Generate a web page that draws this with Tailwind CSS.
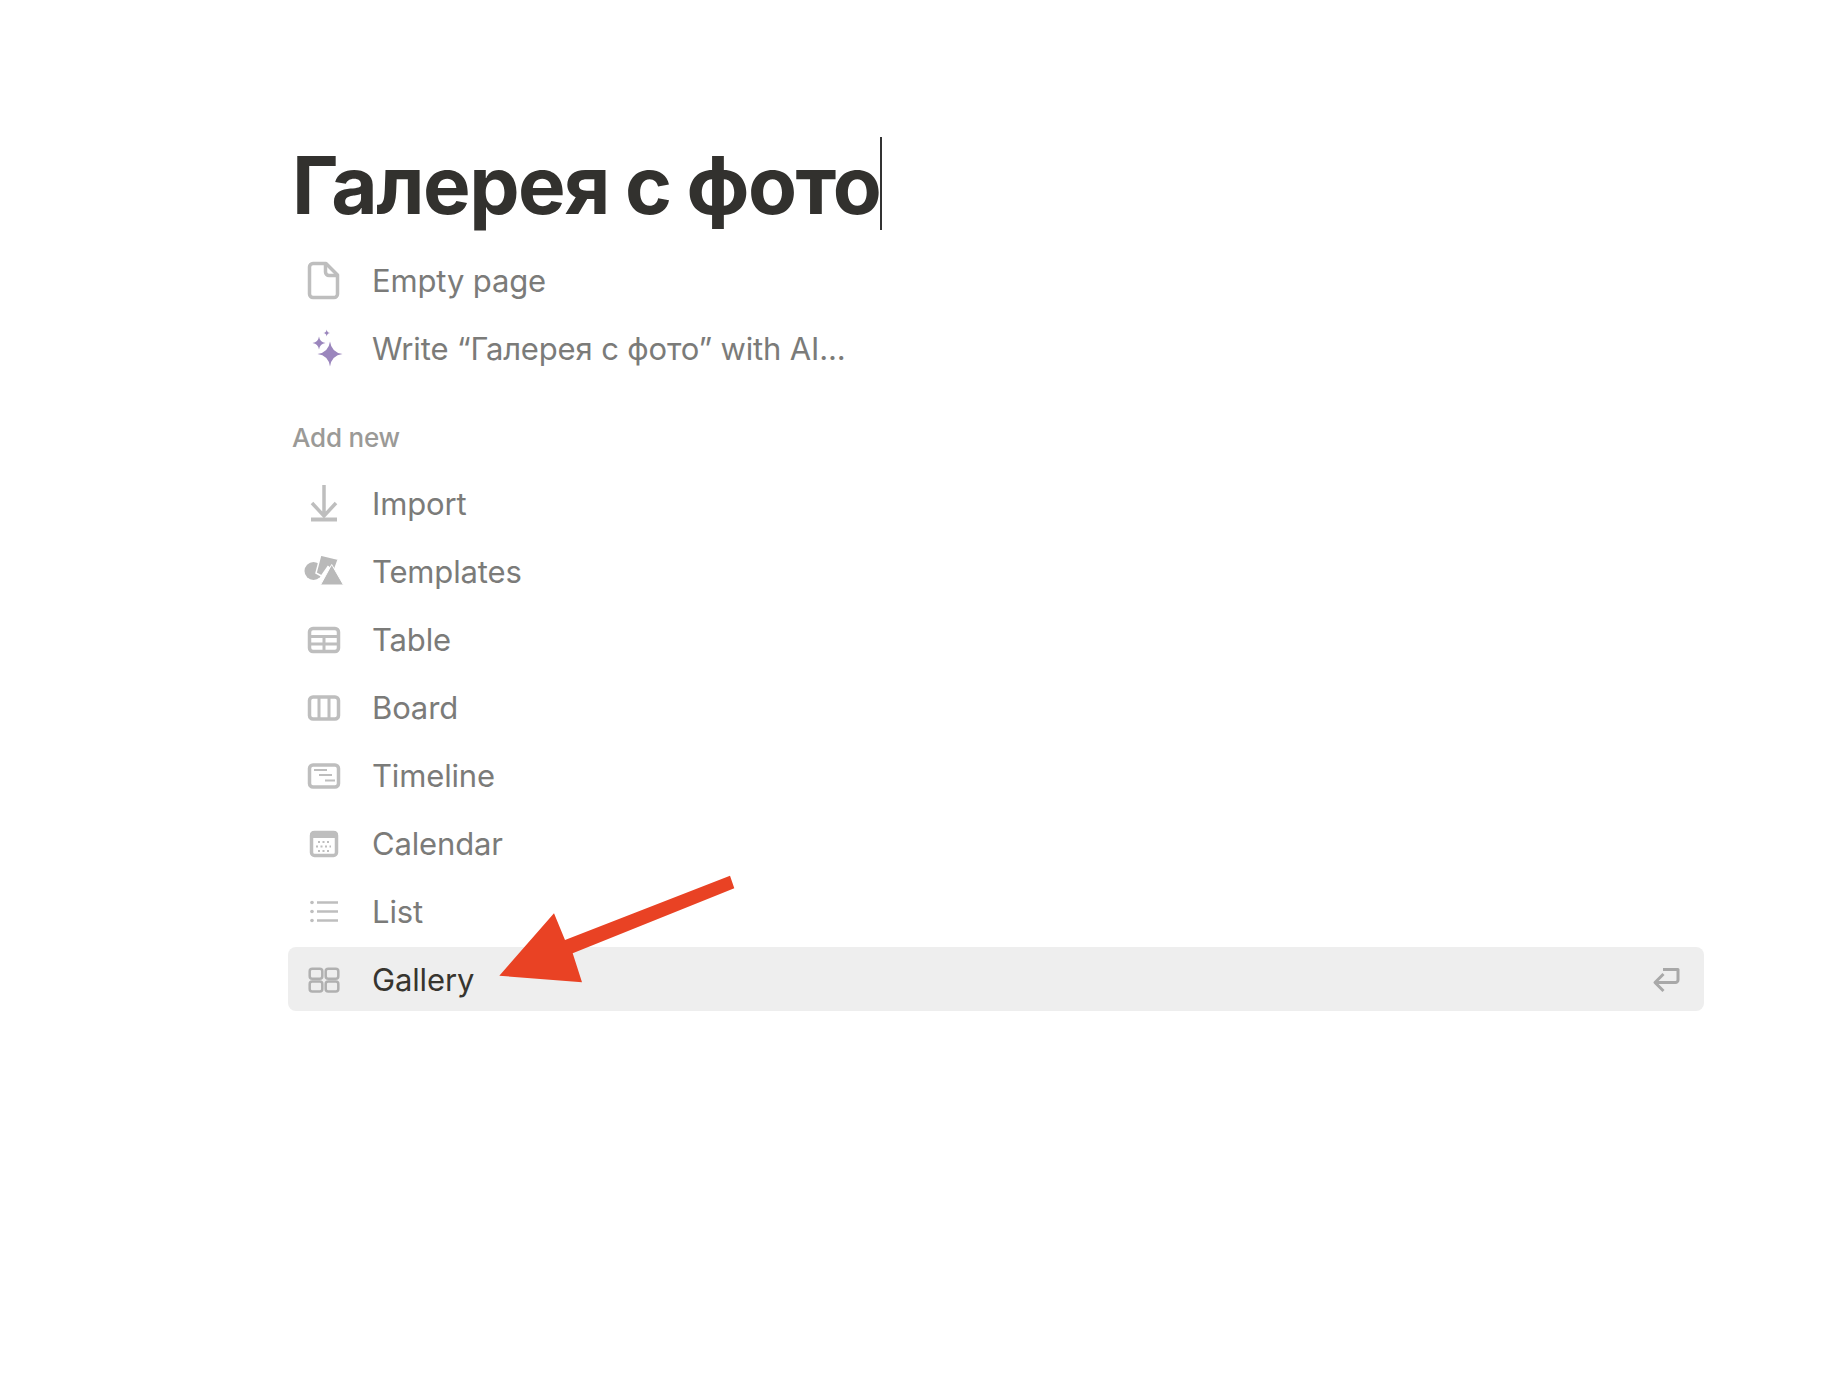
<!DOCTYPE html>
<html><head><meta charset="utf-8"><script src="https://cdn.jsdelivr.net/npm/@tailwindcss/browser@4"></script></head>
<body class="bg-white">
<div class="relative w-[1840px] h-[1394px] overflow-hidden font-['Inter','Liberation_Sans',sans-serif]">
  <div class="ml-[288px] w-[1416px] pt-[137px]">
    <div class="h-[93px] pl-[4px] flex items-center text-[80px] font-bold leading-none tracking-[-1.5px] [word-spacing:-1.5px] text-[#32312e]"><span class="pt-[2px]">Галерея с фото</span><span class="w-[2px] h-[93px] bg-[#333]"></span></div>
    <div class="mt-[19px] flex flex-col gap-1 text-[31px] tracking-[-0.15px] text-[#7b7b79]">
      <div class="h-16 flex items-center"><div class="w-[72px] flex justify-center"><svg width="40" height="40" viewBox="0 0 40 40" fill="none" stroke="#bebebe" stroke-width="3.500" stroke-linejoin="round"><path d="M9 2.500H22L33.500 14V33a3.500 3.500 0 0 1-3.500 3.500H9A3.500 3.500 0 0 1 5.500 33V6A3.500 3.500 0 0 1 9 2.500Z"/><path d="M21.500 3V11A3.500 3.500 0 0 0 25 14.500H33"/></svg></div><span class="ml-3">Empty page</span></div>
      <div class="h-16 flex items-center"><div class="w-[72px] flex justify-center"><svg width="40" height="40" viewBox="0 0 40 40" fill="#9b86bd"><path d="M26 12.500Q27.500 23.500 38.500 25Q27.500 26.500 26 37.500Q24.500 26.500 13.500 25Q24.500 23.500 26 12.500Z"/><path d="M15 7.500Q15.800 13.200 21.500 14Q15.800 14.800 15 20.500Q14.200 14.800 8.500 14Q14.200 13.200 15 7.500Z"/><path d="M22.700 0.500Q23.100 3.600 26.200 4Q23.100 4.400 22.700 7.500Q22.300 4.400 19.200 4Q22.300 3.600 22.700 0.500Z"/></svg></div><span class="ml-3">Write “Галерея с фото” with AI...</span></div>
    </div>
    <div class="mt-10 mb-4 h-[34px] pl-1 pb-[2px] flex items-center text-[26px] tracking-[-0.2px] font-medium text-[#9b9a97]">Add new</div>
    <div class="flex flex-col gap-1 text-[31px] tracking-[-0.15px] text-[#7b7b79]">
      <div class="h-16 pt-[2px] flex items-center"><div class="w-[72px] flex justify-center"><svg width="40" height="40" viewBox="0 0 40 40" fill="none" stroke="#bebebe" stroke-width="3.500"><path d="M20 1V32M8 19L20 32L32 19"/><path d="M7 35.500H33" stroke-width="4"/></svg></div><span class="ml-3">Import</span></div>
      <div class="h-16 pt-[2px] flex items-center"><div class="w-[72px] flex justify-center"><svg width="40" height="40" viewBox="0 0 40 40" fill="#b9b9b9"><circle cx="9.500" cy="19" r="9"/><path d="M16.700 3L34.300 7.300L30 19L24 14.500L17.500 24L12 21Z" stroke="#fff" stroke-width="1.500"/><path d="M27.700 12.500L39.500 33H16.500Z" stroke="#fff" stroke-width="1"/></svg></div><span class="ml-3">Templates</span></div>
      <div class="h-16 pt-[2px] flex items-center"><div class="w-[72px] flex justify-center"><svg width="40" height="40" viewBox="0 0 40 40" fill="none" stroke="#bebebe" stroke-width="3.500"><rect x="5.500" y="8.500" width="29" height="23" rx="3.500"/><path d="M5.500 16.500H34.500M5.500 24H34.500M20 16.500V31" stroke-width="3"/></svg></div><span class="ml-3">Table</span></div>
      <div class="h-16 pt-[2px] flex items-center"><div class="w-[72px] flex justify-center"><svg width="40" height="40" viewBox="0 0 40 40" fill="none" stroke="#bebebe" stroke-width="3.500"><rect x="5.500" y="9" width="29" height="22" rx="3.500"/><path d="M15 9V31M25 9V31" stroke-width="3"/></svg></div><span class="ml-3">Board</span></div>
      <div class="h-16 pt-[2px] flex items-center"><div class="w-[72px] flex justify-center"><svg width="40" height="40" viewBox="0 0 40 40" fill="none" stroke="#bebebe" stroke-width="3.500"><rect x="5.500" y="9" width="29" height="22" rx="3.500"/><path d="M10 14H23M15 19H28M21 24.500H31" stroke-width="2"/></svg></div><span class="ml-3">Timeline</span></div>
      <div class="h-16 pt-[2px] flex items-center"><div class="w-[72px] flex justify-center"><svg width="40" height="40" viewBox="0 0 40 40" fill="none" stroke="#bebebe"><rect x="7.500" y="8.500" width="25" height="23" rx="3" stroke-width="3.500"/><path d="M7 13V11A3 3 0 0 1 10 8H30A3 3 0 0 1 33 11V13Z" fill="#bebebe" stroke-width="2"/><path d="M14 18H27M12 22.500H27M14 27H25" stroke-width="2" stroke-dasharray="2 2.500"/></svg></div><span class="ml-3">Calendar</span></div>
      <div class="h-16 pt-[2px] flex items-center"><div class="w-[72px] flex justify-center"><svg width="40" height="40" viewBox="0 0 40 40" fill="none" stroke="#bebebe" stroke-width="2.500"><path d="M13 10.500H34M13 19.500H34M13 28.500H34"/><circle cx="8" cy="10.500" r="1.800" fill="#bebebe" stroke="none"/><circle cx="8" cy="19.500" r="1.800" fill="#bebebe" stroke="none"/><circle cx="8" cy="28.500" r="1.800" fill="#bebebe" stroke="none"/></svg></div><span class="ml-3">List</span></div>
      <div class="h-16 pt-[2px] flex items-center bg-[#eeeeee] rounded-lg"><div class="w-[72px] flex justify-center"><svg width="40" height="40" viewBox="0 0 40 40" fill="none" stroke="#b0b0b0" stroke-width="2.500"><rect x="5.700" y="8.700" width="12.600" height="10" rx="2.500"/><rect x="21.700" y="8.700" width="12.600" height="10" rx="2.500"/><rect x="5.700" y="21.500" width="12.600" height="10" rx="2.500"/><rect x="21.700" y="21.500" width="12.600" height="10" rx="2.500"/></svg></div><span class="ml-3 text-[#37352f]">Gallery</span>
        <svg class="ml-auto mr-[22px]" width="30" height="26" viewBox="0 0 30 26" fill="none" stroke="#a8a8a8" stroke-width="3" stroke-linejoin="round"><path d="M3 15.500H23.500A2.500 2.500 0 0 0 26 13V2.500H11M11.500 7L3 15.500L11.500 24"/></svg></div>
    </div>
  </div>
  <svg class="absolute left-0 top-0 pointer-events-none" width="1840" height="1394" viewBox="0 0 1840 1394"><path d="M730 875.700L734.300 888.300L572.700 953.300L582 982.300L499.300 975.700L554 913.300L565 940Z" fill="#e94224"/></svg>
</div>
</body></html>
